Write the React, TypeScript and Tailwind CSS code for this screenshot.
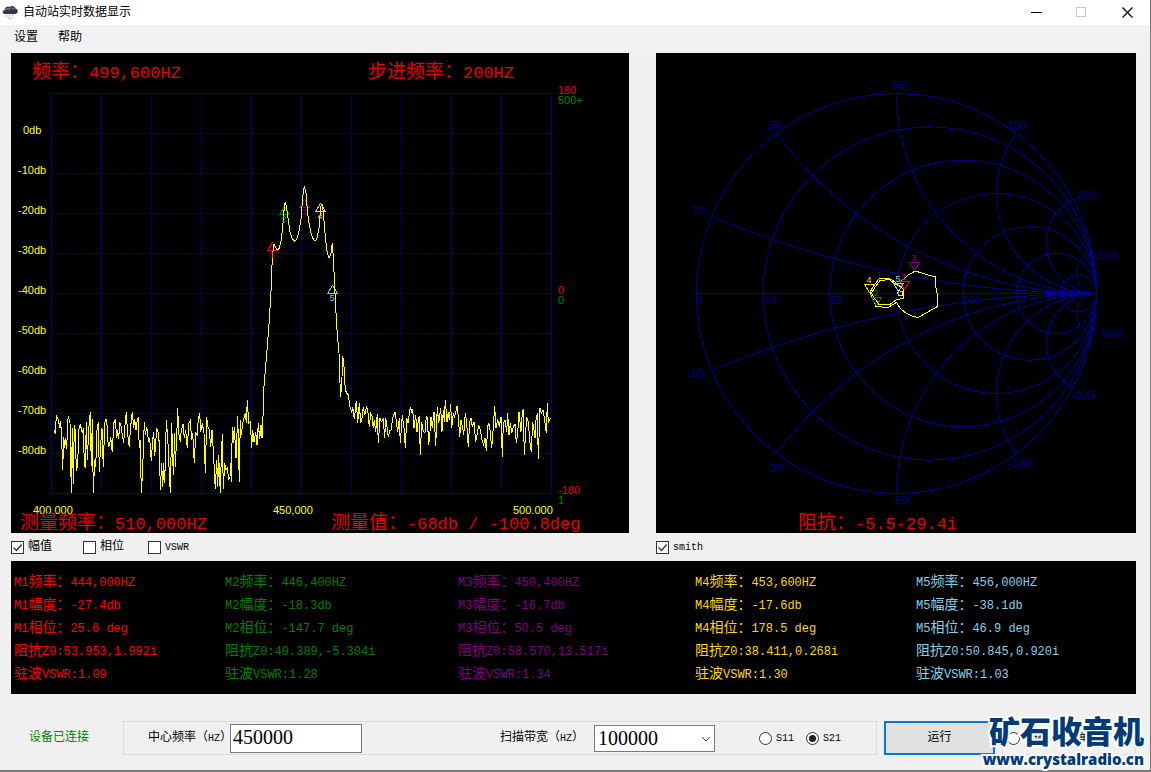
import React from 'react';

const SANS = '"Liberation Sans", "Noto Sans CJK SC", sans-serif';
const MONO = '"Liberation Mono", "Noto Sans CJK SC", monospace';
const GRID = '#00008b';

// Samples are stored in thirds of a plot pixel, relative to each segment's origin
interface Segment {
  origin: [number, number];
  samples: string;
}

const TRACE: Segment[] = [
  {
    origin: [0, 380],
    samples:
      '163,150 166,162 169,105 175,120 180,145 182,122 185,180 188,270 191,170 194,205 197,175 200,208 203,120 206,112 210,130 214,340 217,145 220,312 223,135 226,150 229,272 233,255 236,150 241,133 247,160 250,145 253,250 256,265 259,125 262,240 266,150 271,95 274,258 277,118 280,340 284,240 287,262 291,150 295,125 298,275 302,190 306,145 310,262 314,130 317,118 320,120 325,200 329,195 332,170 335,200 337,217 341,130 346,118 350,175 353,150 356,178 359,125 364,140 367,165 371,188 374,145 379,95 383,165 388,200 391,150 397,95 401,145 404,118 408,150 412,118 415,115 418,205 421,180 424,340 428,265 433,125 436,165 440,140 446,185 449,175 454,243 458,180 461,155 464,228 470,145 475,160 478,190 481,330 485,250 488,322 491,250 494,310 499,120 503,170 506,240 511,340 515,130 520,285 524,160 526,260 530,170 533,85 536,160 541,185 544,150 549,133 553,175 557,150 562,205 566,130 571,122 575,180 578,160 583,250 587,160 592,165 595,115 599,100 602,155 607,130 612,160 616,280 620,112 624,140 628,150 632,200 636,150 640,210 646,328 650,240 653,320 656,225 661,340 664,230 667,162 670,328 674,250 678,270 682,265 686,300 690,290 692,250 694,305 697,140 700,190 703,140 708,235 713,108 718,305 721,120 724,165 728,130 732,115 736,100 739,128 742,60 746,130 751,125 755,203 758,150 762,185 767,155 771,195 775,130 779,178 783,135 786,175 790,90',
  },
  {
    origin: [240, 170],
    samples:
      '70,720 71,660 76,600 82,530 88,450 94,350 97,260 102,222 106,230 112,240 118,235 124,210 130,150 133,110 136,97 140,115 145,150 150,185 156,205 163,214 170,208 178,180 184,140 188,80 193,48 198,70 202,120 207,160 213,190 220,208 225,214 231,205 238,170 242,110 246,103 250,125 254,180 260,240 267,265 273,250 277,220 280,262 285,370 290,470 297,550 300,640 302,680 306,620 308,557 312,590 316,660 322,672',
  },
  {
    origin: [320, 380],
    samples:
      '84,42 90,80 95,98 98,80 103,118 109,62 113,130 118,70 122,130 126,115 130,80 134,105 140,78 144,100 148,142 152,100 156,108 160,145 163,120 167,155 172,103 175,190 180,115 184,125 190,118 194,175 197,115 201,140 205,172 209,150 213,150 218,115 225,95 229,125 233,155 238,115 241,190 247,105 252,145 256,203 260,115 264,130 271,82 275,95 278,90 282,145 287,105 291,155 294,128 298,108 301,226 305,125 310,155 315,158 319,110 322,112 326,195 330,155 333,110 337,145 342,95 347,198 352,82 356,130 362,85 366,155 370,90 373,125 376,60 381,125 385,95 388,120 392,72 395,145 400,100 404,110 411,78 415,110 419,172 423,120 428,145 431,165 436,100 440,130 445,202 449,125 453,115 457,140 462,125 467,185 472,160 476,135 481,150 486,180 491,195 495,175 499,213 503,140 506,128 510,150 515,203 519,155 524,78 528,145 533,118 538,140 543,110 547,230 550,130 555,120 560,155 563,100 567,165 571,130 575,160 580,140 585,132 589,190 593,160 597,95 603,155 607,100 610,88 613,226 617,155 620,110 625,125 630,190 634,215 638,125 642,150 645,175 648,120 652,100 655,236 660,85 664,100 669,90 674,120 679,160 682,68 685,130 689,118 692,116',
  },
];

const SMITH_TRACE: Segment[] = [
  {
    origin: [840, 240],
    samples:
      '182,122 192,118 205,105 226,93 254,102 287,111 287,140 291,160 291,200 262,217 236,232 219,230 195,217 180,205 170,187 160,193 145,202 108,200 100,180 90,158 103,135 118,116 145,115 160,122 175,135 190,148 190,175 168,180 150,193 118,195 94,160 106,140 121,121 148,119 165,132 178,138 190,140',
  },
  { origin: [840, 240], samples: '172,152 188,154 188,165 176,165 172,160 178,155' },
];

const toPoints = (segments: Segment[]) =>
  segments
    .flatMap(({ origin, samples }) =>
      samples.split(' ').map((pair) => {
        const [x, y] = pair.split(',').map(Number);
        return `${(origin[0] + x / 3).toFixed(1)},${(origin[1] + y / 3).toFixed(1)}`;
      })
    )
    .join(' ');

interface MarkerPoint {
  id: number;
  color: string;
  x: number;
  y: number;
}

const CHART_MARKERS: MarkerPoint[] = [
  { id: 1, color: '#ff0000', x: 272, y: 242 },
  { id: 2, color: '#008000', x: 284, y: 206 },
  { id: 3, color: '#800080', x: 304, y: 199 },
  { id: 4, color: '#ffd700', x: 320, y: 203 },
  { id: 5, color: '#87ceeb', x: 332, y: 285 },
];

const SMITH_MARKERS: MarkerPoint[] = [
  { id: 1, color: '#ff0000', x: 904, y: 289 },
  { id: 2, color: '#008000', x: 876, y: 305 },
  { id: 3, color: '#800080', x: 914, y: 270 },
  { id: 4, color: '#ffd700', x: 869, y: 292 },
  { id: 5, color: '#87ceeb', x: 898, y: 291 },
];

const SMITH_LABELS: [string, number, number][] = [
  ['50i', 893, 89],
  ['25i', 767, 129],
  ['10i', 693, 214],
  ['100i', 1008, 129],
  ['200i', 1077, 199],
  ['500i', 1098, 259],
  ['-10i', 687, 377],
  ['-25i', 767, 472],
  ['-50i', 892, 504],
  ['-100i', 1008, 467],
  ['-200i', 1072, 399],
  ['-500i', 1098, 337],
  ['0', 697, 304],
  ['10', 765, 304],
  ['25', 830, 304],
  ['100', 963, 304],
];

const READINGS = [
  { color: 'text-[#ff0000]', lines: ['M1频率：444,000HZ', 'M1幅度：-27.4db', 'M1相位：25.6 deg', '阻抗Z0:53.953,1.992i', '驻波VSWR:1.09'] },
  { color: 'text-[#008000]', lines: ['M2频率：446,400HZ', 'M2幅度：-18.3db', 'M2相位：-147.7 deg', '阻抗Z0:40.389,-5.304i', '驻波VSWR:1.28'] },
  { color: 'text-[#800080]', lines: ['M3频率：450,400HZ', 'M3幅度：-16.7db', 'M3相位：50.5 deg', '阻抗Z0:58.570,13.517i', '驻波VSWR:1.34'] },
  { color: 'text-[#ffd700]', lines: ['M4频率：453,600HZ', 'M4幅度：-17.6db', 'M4相位：178.5 deg', '阻抗Z0:38.411,0.268i', '驻波VSWR:1.30'] },
  { color: 'text-[#87ceeb]', lines: ['M5频率：456,000HZ', 'M5幅度：-38.1db', 'M5相位：46.9 deg', '阻抗Z0:50.845,0.920i', '驻波VSWR:1.03'] },
];

// Latin runs are set a little smaller so two of them fill one Chinese cell
const splitRuns = (text: string) => text.match(/[\x20-\x7e]+|[^\x20-\x7e]+/g) || [];
const isLatin = (run: string) => run.charCodeAt(0) < 0x7f;

const Readout: React.FC<{ x: number; y: number; text: string }> = ({ x, y, text }) => (
  <text x={x} y={y} fill="#e60000" fontFamily={MONO}>
    {splitRuns(text).map((run, i) => (
      <tspan key={i} fontSize={isLatin(run) ? 17 : 19}>
        {run}
      </tspan>
    ))}
  </text>
);

const ReadingLine: React.FC<{ text: string }> = ({ text }) => (
  <li className="h-[23px] whitespace-nowrap">
    {splitRuns(text).map((run, i) => (
      <span key={i} className={isLatin(run) ? 'text-[12px]' : 'text-[14px]'}>
        {run}
      </span>
    ))}
  </li>
);

const SpectrumChart = () => (
  <svg viewBox="11 53 618 480" className="block w-full h-auto bg-black overflow-visible" fontFamily={SANS} fontSize={11}>
    <g stroke={GRID} fill="none" shapeRendering="crispEdges">
      <rect x={51.5} y={93.5} width={500} height={400} />
      {[1, 2, 3, 4, 5, 6, 7, 8, 9].map((i) => (
        <g key={i} strokeDasharray="3 1">
          <line x1={51.5 + i * 50} x2={51.5 + i * 50} y1={94} y2={493} />
          <line x1={52} x2={551} y1={93.5 + i * 40} y2={93.5 + i * 40} />
        </g>
      ))}
    </g>

    {/* dB scale */}
    <g fill="#ffff00">
      {[0, 10, 20, 30, 40, 50, 60, 70, 80].map((db) => (
        <text key={db} x={db === 0 ? 23 : 18} y={134 + db * 4}>
          {db === 0 ? '0db' : `-${db}db`}
        </text>
      ))}
      <text x={33} y={514}>400.000</text>
      <text x={273} y={514}>450,000</text>
      <text x={513} y={514}>500.000</text>
    </g>

    {/* Phase / VSWR scales */}
    <g fill="#e60000">
      <text x={558} y={94}>180</text>
      <text x={558} y={294}>0</text>
      <text x={558} y={494}>-180</text>
    </g>
    <g fill="#008000">
      <text x={558} y={104}>500+</text>
      <text x={558} y={304}>0</text>
      <text x={558} y={504}>1</text>
    </g>

    <g fill="none" shapeRendering="crispEdges">
      {CHART_MARKERS.map((m) => (
        <path key={m.id} stroke={m.color} d={`M${m.x + 0.5} ${m.y + 0.5}l5 8h-10z`} />
      ))}
      <polyline points={toPoints(TRACE)} stroke="#ffff00" />
    </g>
    {CHART_MARKERS.map((m) => (
      <text key={m.id} x={m.x} y={m.y + 16} fill={m.color} fontSize={9} textAnchor="middle">
        {m.id}
      </text>
    ))}

    <Readout x={32} y={78} text="频率：499,600HZ" />
    <Readout x={368} y={78} text="步进频率：200HZ" />
    <Readout x={20} y={529} text="测量频率：510,000HZ" />
    <Readout x={331} y={529} text="测量值：-68db / -100.8deg" />
  </svg>
);

const SmithChart = () => {
  const cx = 896.5;
  const cy = 293.5;
  const radius = 200;
  return (
    <svg viewBox="656 53 480 480" className="block w-full h-auto bg-black overflow-visible" fontFamily={SANS} fontSize={11}>
      <clipPath id="smith-unit">
        <circle cx={cx} cy={cy} r={radius} />
      </clipPath>
      <g stroke={GRID} fill="none" shapeRendering="crispEdges">
        <circle cx={cx} cy={cy} r={radius} />
        <line x1={cx - radius} x2={cx + radius} y1={cy} y2={cy} />
        {/* constant resistance */}
        {[0.2, 0.5, 1, 2, 4, 10].map((r) => (
          <circle key={r} cx={cx + (radius * r) / (1 + r)} cy={cy} r={radius / (1 + r)} />
        ))}
        {/* constant reactance */}
        <g clipPath="url(#smith-unit)">
          {[0.2, 0.5, 1, 2, 4, 10].map((r) => (
            <g key={r}>
              <circle cx={cx + radius} cy={cy - radius / r} r={radius / r} />
              <circle cx={cx + radius} cy={cy + radius / r} r={radius / r} />
            </g>
          ))}
        </g>
      </g>
      <g fill={GRID}>
        {SMITH_LABELS.map(([label, x, y]) => (
          <text key={label} x={x} y={y}>
            {label}
          </text>
        ))}
      </g>
      <g fill="none" shapeRendering="crispEdges">
        {SMITH_TRACE.map((segment, i) => (
          <polyline key={i} points={toPoints([segment])} stroke="#ffff00" />
        ))}
        {SMITH_MARKERS.map((m) => (
          <path key={m.id} stroke={m.color} d={`M${m.x + 0.5} ${m.y + 0.5}l5 -8h-10z`} />
        ))}
      </g>
      {SMITH_MARKERS.map((m) => (
        <text key={m.id} x={m.x} y={m.y - 9} fill={m.color} fontSize={9} textAnchor="middle">
          {m.id}
        </text>
      ))}
      <Readout x={798} y={529} text="阻抗：-5.5-29.4i" />
    </svg>
  );
};

const CheckOption: React.FC<{ label: string; checked?: boolean; latin?: boolean }> = ({ label, checked, latin }) => (
  <label className="flex items-center gap-1">
    <span className="relative block w-[13px] h-[13px]">
      <input
        type="checkbox"
        defaultChecked={checked}
        className="peer block appearance-none w-[13px] h-[13px] bg-white border border-[#333333]"
      />
      <svg
        viewBox="0 0 13 13"
        className="absolute inset-0 hidden peer-checked:block pointer-events-none"
        fill="none"
        stroke="#333333"
        strokeWidth={1.3}
      >
        <path d="M2.5 6.5l3 3L10.7 3.5" />
      </svg>
    </span>
    <span className={latin ? 'text-[10px]' : 'text-[12px]'}>{label}</span>
  </label>
);

const RadioOption: React.FC<{ name: string; label: string; checked?: boolean }> = ({ name, label, checked }) => (
  <label className="flex items-center gap-1 whitespace-nowrap">
    <span className="relative block w-[13px] h-[13px]">
      <input
        type="radio"
        name={name}
        defaultChecked={checked}
        className="peer block appearance-none w-[13px] h-[13px] rounded-full bg-white border border-[#333333]"
      />
      <span className="absolute inset-[3px] hidden peer-checked:block rounded-full bg-[#222222] pointer-events-none"></span>
    </span>
    <span className="text-[10px]">{label}</span>
  </label>
);

const StormIcon = () => (
  <svg viewBox="0 0 16 16" className="w-4 h-4">
    <path d="M3 9C0 9 0 5.500 2.500 5C2.500 2 5.500 1 7.500 2C9.500 0 13 1 13.300 3.500C16.500 4 16.500 8.500 13.500 9z" fill="#34344a" />
    <path d="M3 5.500C4 3.500 6 3.500 7 4.500C8 2.500 11 2.500 12 4.500" fill="none" stroke="#7c7c96" strokeWidth={1.2} />
    <path d="M5 10l-1 2M8 9.500l-1 2M11 9.500l-1 2M6.500 12.500l-.5 1.500M9 12.500l-1 2.500M12 12l-.5 1" stroke="#a4a8b4" fill="none" />
  </svg>
);

const TitleBar = () => (
  <header className="flex items-center h-[25px] bg-white pl-[2px]">
    <StormIcon />
    <h1 className="ml-[5px] text-[12px]">自动站实时数据显示</h1>
    <div className="ml-auto flex h-full">
      <button aria-label="最小化" className="w-[45px] flex items-center justify-center">
        <svg viewBox="0 0 11 11" className="w-[11px] h-[11px]" shapeRendering="crispEdges">
          <path d="M0 5.5h11" stroke="#000000" />
        </svg>
      </button>
      <button aria-label="最大化" className="w-[45px] flex items-center justify-center">
        <svg viewBox="0 0 11 11" className="w-[11px] h-[11px]" shapeRendering="crispEdges">
          <path d="M.5.5h9v9h-9z" stroke="#c8c8c8" fill="none" />
        </svg>
      </button>
      <button aria-label="关闭" className="w-[46px] flex items-center justify-center">
        <svg viewBox="0 0 11 11" className="w-[11px] h-[11px]">
          <path d="M.5.5l10 10M10.500.5l-10 10" stroke="#000000" strokeWidth={1.2} />
        </svg>
      </button>
    </div>
  </header>
);

const SweepControls = () => (
  <section className="flex items-center pl-[18px] text-[12px]">
    <p className="w-[94px] text-[#008000]">设备已连接</p>
    <div className="flex-1 flex items-center h-[34px] border border-[#dcdcdc] pl-[24px]">
      <label htmlFor="center" className="w-[82px] whitespace-nowrap">
        中心频率（<span className="text-[10px]">HZ</span>）
      </label>
      <input
        id="center"
        type="text"
        defaultValue="450000"
        className="relative w-[132px] h-[29px] bg-white border border-[#7a7a7a] px-[2px] pb-[3px] text-[20px] font-['Liberation_Serif',serif]"
      />
      <label htmlFor="span" className="ml-[138px] w-[94px] whitespace-nowrap">
        扫描带宽（<span className="text-[10px]">HZ</span>）
      </label>
      <div className="relative">
        <select
          id="span"
          className="block appearance-none w-[121px] h-[27px] bg-white border border-[#7a7a7a] px-[3px] text-[20px] leading-[24px] font-['Liberation_Serif',serif]"
        >
          <option>100000</option>
        </select>
        <svg viewBox="0 0 10 6" className="absolute right-1 top-[11px] w-[10px] h-[6px] pointer-events-none" fill="none" stroke="#444444">
          <path d="M1 1l4 4 4-4" />
        </svg>
      </div>
      <div className="flex gap-[12px] ml-[44px]">
        <RadioOption name="port" label="S11" />
        <RadioOption name="port" label="S21" checked />
      </div>
    </div>
    <button className="ml-[7px] w-[111px] h-[34px] bg-[#e1e1e1] border-2 border-[#0078d7]">运行</button>
    <div className="ml-[7px] w-[134px] flex items-center gap-[18px] h-[34px] border border-[#dcdcdc] pl-[4px]">
      <RadioOption name="mode" label="循环" />
      <RadioOption name="mode" label="单次" />
    </div>
  </section>
);

const Watermark = () => (
  <div className="absolute right-[6px] bottom-0 text-[#003a78] font-black pointer-events-none text-right [-webkit-text-stroke:4px_white] [paint-order:stroke_fill]">
    <p className="text-[31px] leading-[36px] whitespace-nowrap font-['Noto_Sans_CJK_SC',sans-serif]">矿石收音机</p>
    <p className="text-[15px] leading-[22px] font-extrabold whitespace-nowrap font-['Open_Sans',sans-serif]">www.crystalradio.cn</p>
  </div>
);

const App = () => {
  return (
    <div className="relative min-h-screen bg-[#f0f0f0] text-black border-r border-b-2 border-[#777777] font-['Liberation_Mono','Noto_Sans_CJK_SC',monospace]">
      <TitleBar />
      <nav className="flex items-center gap-5 h-[25px] px-[14px] text-[12px] bg-[#f2f2f2]">
        <button>设置</button>
        <button>帮助</button>
      </nav>

      <main className="pt-[3px] pl-[11px] pr-[14px]">
        <div className="grid grid-cols-[618fr_480fr] gap-x-[27px]">
          <section>
            <SpectrumChart />
            <div className="flex items-center h-[28px]">
              <div className="w-[72px]"><CheckOption label="幅值" checked /></div>
              <div className="w-[65px]"><CheckOption label="相位" /></div>
              <CheckOption label="VSWR" latin />
            </div>
          </section>
          <section>
            <SmithChart />
            <div className="flex items-center h-[28px]">
              <CheckOption label="smith" checked latin />
            </div>
          </section>
        </div>

        {/* Marker readings */}
        <section className="grid grid-cols-[211fr_233fr_237fr_221fr_220fr] h-[133px] bg-black pl-[3px] pt-[10px] leading-[23px]">
          {READINGS.map(({ color, lines }) => (
            <ul key={color} className={color}>
              {lines.map((line) => (
                <ReadingLine key={line} text={line} />
              ))}
            </ul>
          ))}
        </section>

        <div className="pt-[27px]">
          <SweepControls />
        </div>
      </main>
      <Watermark />
    </div>
  );
};

export default App;
